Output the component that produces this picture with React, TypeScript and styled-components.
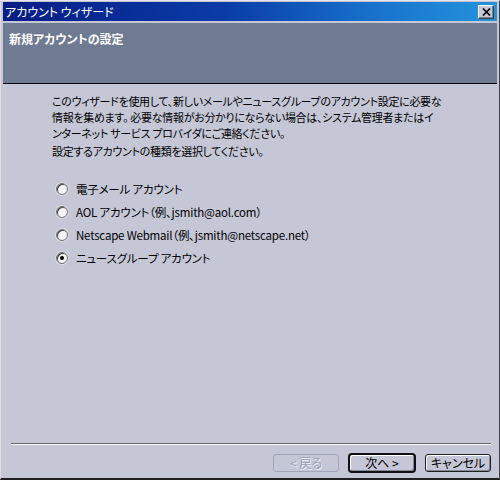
import React, { useState } from "react";
import styled, { createGlobalStyle, css } from "styled-components";

const GlobalStyle = createGlobalStyle`
  html, body {
    margin: 0;
    padding: 0;
    background: #c5c7d7;
  }
  * {
    box-sizing: border-box;
  }
`;

const uiFont = `"Noto Sans CJK JP", "Noto Sans", sans-serif`;

const Window = styled.div`
  width: 500px;
  height: 480px;
  display: flex;
  flex-direction: column;
  background: #c5c7d7;
  border-top: 1px solid #e8e4ec;
  border-left: 1px solid #e8d8e4;
  border-right: 1px solid #404040;
  border-bottom: 2px solid #202020;
  padding: 1px 2px 0 2px;
  font-family: ${uiFont};
  font-feature-settings: "palt";
  color: #000;
`;

const TitleBar = styled.div`
  height: 19px;
  flex-shrink: 0;
  display: flex;
  align-items: center;
  justify-content: space-between;
  padding: 0 3px 0 2px;
  background: linear-gradient(90deg, #081c84 0%, #0a3ca8 45%, #1872cc 75%, #2494dc 100%);
`;

const TitleText = styled.span`
  color: #fff;
  font-size: 12px;
  line-height: 1;
`;

const CloseButton = styled.button`
  width: 16px;
  height: 14px;
  padding: 0;
  display: flex;
  align-items: center;
  justify-content: center;
  background: #c5c7d7;
  border: 1px solid;
  border-color: #fff #404040 #404040 #fff;
  box-shadow: inset -1px -1px 0 #808080;
`;

const Header = styled.div`
  height: 61px;
  flex-shrink: 0;
  margin-top: 2px;
  padding: 9px 6px 0;
  background: #6f7a93;
  border-bottom: 1px solid #000;
`;

const HeaderTitle = styled.div`
  color: #fff;
  font-size: 12px;
  font-weight: 700;
  line-height: 14px;
`;

const Body = styled.div`
  flex: 1;
  padding: 9px 0 0 49px;
`;

const Paragraph = styled.p<{ $gap?: number }>`
  margin: 0 0 ${(p) => p.$gap ?? 0}px;
  font-size: 11px;
  letter-spacing: -0.3px;
  line-height: 16px;
  white-space: nowrap;
`;

const RadioList = styled.div`
  display: flex;
  flex-direction: column;
  gap: 7px;
  padding: 22px 0 0 4px;
`;

const RadioRow = styled.label`
  display: flex;
  align-items: center;
  gap: 8px;
  height: 16px;
  font-size: 11.5px;
  letter-spacing: -0.2px;
  cursor: default;
`;

const RadioDot = styled.span<{ $checked: boolean }>`
  width: 12px;
  height: 12px;
  border-radius: 50%;
  flex-shrink: 0;
  display: flex;
  align-items: center;
  justify-content: center;
  background: #f4f4f8;
  border: 1px solid #707070;
  box-shadow: inset 1px 1px 0 #404040, 0 0 0 1px #dcdde6;
  ${(p) =>
    p.$checked &&
    css`
      &::after {
        content: "";
        width: 4px;
        height: 4px;
        border-radius: 50%;
        background: #000;
      }
    `}
`;

const Footer = styled.div`
  flex-shrink: 0;
  padding: 0 6px 6px 8px;
`;

const Separator = styled.div`
  height: 2px;
  border-top: 1px solid #606878;
  border-bottom: 1px solid #fff;
`;

const ButtonRow = styled.div`
  display: flex;
  justify-content: flex-end;
  gap: 9px;
  padding-top: 9px;
`;

const DialogButton = styled.button<{ $default?: boolean }>`
  width: 66px;
  height: 18px;
  padding: 0;
  font-family: ${uiFont};
  font-feature-settings: "palt";
  font-size: 12px;
  line-height: 1;
  color: #000;
  background: #c5c7d7;
  border: 1px solid #202020;
  border-radius: 3px;
  box-shadow: inset 1px 1px 0 #fff, inset -1px -1px 0 #8088a0;

  &:disabled {
    color: #9aa0b4;
    border-color: #a0a6ba;
    text-shadow: 1px 1px 0 #eef0f8;
    box-shadow: none;
  }

  ${(p) =>
    p.$default &&
    css`
      width: 68px;
      height: 20px;
      border: 2px solid #101010;
      border-radius: 4px;
      margin: -1px 0;
    `}
`;

const options = [
  "電子メール アカウント",
  "AOL アカウント（例、jsmith@aol.com）",
  "Netscape Webmail（例、jsmith@netscape.net）",
  "ニュースグループ アカウント",
];

const App: React.FC = () => {
  const [selected, setSelected] = useState(3);

  return (
    <>
      <GlobalStyle />
      <Window>
        <TitleBar>
          <TitleText>アカウント ウィザード</TitleText>
          <CloseButton aria-label="閉じる">
            <svg width="9" height="8" viewBox="0 0 9 8">
              <path d="M1 0.5 L8 7.5 M8 0.5 L1 7.5" stroke="#000" strokeWidth="1.6" />
            </svg>
          </CloseButton>
        </TitleBar>
        <Header>
          <HeaderTitle>新規アカウントの設定</HeaderTitle>
        </Header>
        <Body>
          <Paragraph $gap={2}>
            このウィザードを使用して、新しいメールやニュースグループのアカウント設定に必要な
            <br />
            情報を集めます。 必要な情報がお分かりにならない場合は、システム管理者またはイ
            <br />
            ンターネット サービス プロバイダにご連絡ください。
          </Paragraph>
          <Paragraph>設定するアカウントの種類を選択してください。</Paragraph>
          <RadioList>
            {options.map((label, i) => (
              <RadioRow key={label} onClick={() => setSelected(i)}>
                <RadioDot $checked={selected === i} />
                {label}
              </RadioRow>
            ))}
          </RadioList>
        </Body>
        <Footer>
          <Separator />
          <ButtonRow>
            <DialogButton disabled>&lt; 戻る</DialogButton>
            <DialogButton $default>次へ &gt;</DialogButton>
            <DialogButton>キャンセル</DialogButton>
          </ButtonRow>
        </Footer>
      </Window>
    </>
  );
};

export default App;
